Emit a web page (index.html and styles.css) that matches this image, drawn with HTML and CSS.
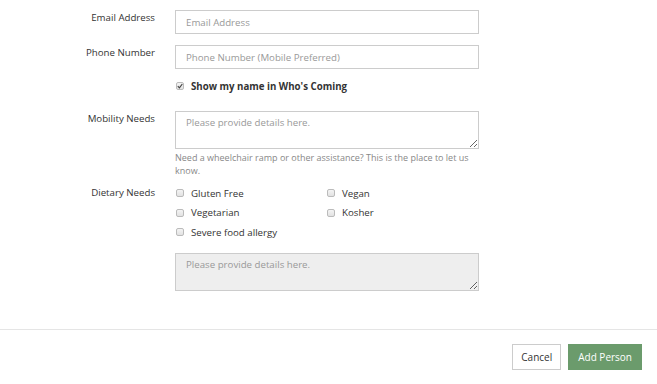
FILE: index.html
```html
<!DOCTYPE html>
<html lang="en">
<head>
    <meta charset="UTF-8">
    <title>Add Person</title>
    <link rel="stylesheet" href="styles.css">
</head>
<body>
    <div class="modal-body">
        <div class="form-row">
            <label class="form-label">Email Address</label>
            <input class="form-input" type="text" placeholder="Email Address">
        </div>
        <div class="form-row">
            <label class="form-label">Phone Number</label>
            <input class="form-input" type="text" placeholder="Phone Number (Mobile Preferred)">
        </div>
        <div class="form-row check-row">
            <span></span>
            <label class="check bold">
                <span class="box checked">
                    <svg width="6" height="6" viewBox="0 0 6 6"><path d="M0.8 3.2 L2.4 4.8 L5.3 1" fill="none" stroke="#444" stroke-width="1.2"/></svg>
                </span>
                Show my name in Who's Coming
            </label>
        </div>
        <div class="form-row mobility-row">
            <label class="form-label">Mobility Needs</label>
            <div>
                <textarea class="form-area" placeholder="Please provide details here."></textarea>
                <p class="help">Need a wheelchair ramp or other assistance? This is the place to let us know.</p>
            </div>
        </div>
        <div class="form-row">
            <label class="form-label diet-label">Dietary Needs</label>
            <div>
                <div class="diet-grid">
                    <label class="check"><span class="box"></span> Gluten Free</label>
                    <label class="check"><span class="box"></span> Vegan</label>
                    <label class="check"><span class="box"></span> Vegetarian</label>
                    <label class="check"><span class="box"></span> Kosher</label>
                    <label class="check"><span class="box"></span> Severe food allergy</label>
                </div>
                <textarea class="form-area disabled" placeholder="Please provide details here." disabled></textarea>
            </div>
        </div>
    </div>
    <div class="modal-footer">
        <button class="btn">Cancel</button>
        <button class="btn btn-primary">Add Person</button>
    </div>
</body>
</html>
```

FILE: styles.css
```css
body {
    margin: 0;
    font-family: "Open Sans", sans-serif;
    font-size: 10px;
    color: #333;
    background: #fff;
}
.modal-body {
    padding: 10px 0 0 0;
    height: 329px;
    box-sizing: border-box;
}
.form-row {
    display: grid;
    grid-template-columns: 155px 304px;
    column-gap: 20px;
    margin-bottom: 11px;
}
.form-label {
    text-align: right;
    padding-top: 1px;
    line-height: 14px;
    font-size: 9.7px;
}
.form-input {
    height: 24px;
    box-sizing: border-box;
    border: 1px solid #ccc;
    padding: 0 10px;
    font-family: "Open Sans", sans-serif;
    font-size: 9.7px;
    color: #333;
    margin: 0;
}
.form-input::placeholder,
.form-area::placeholder {
    color: #999;
}
.form-area {
    display: block;
    width: 304px;
    height: 38px;
    box-sizing: border-box;
    border: 1px solid #ccc;
    padding: 4px 10px;
    font-family: "Open Sans", sans-serif;
    font-size: 9.7px;
    margin: 0;
    resize: vertical;
}
.form-area.disabled {
    background: #eee;
}
.mobility-row {
    margin-bottom: 9px;
}
.help {
    margin: 2px 0 0 0;
    font-size: 9px;
    line-height: 13px;
    color: #888;
}
.check {
    display: flex;
    align-items: center;
    gap: 7px;
    height: 14px;
    font-size: 9.7px;
}
.box {
    display: flex;
    align-items: center;
    justify-content: center;
    width: 8px;
    height: 8px;
    box-sizing: border-box;
    margin-left: 1px;
    border: 1px solid #bbb;
    border-radius: 2px;
    background: linear-gradient(#f4f4f4, #e2e2e2);
}
.bold {
    font-weight: bold;
}
.check-row {
    margin: -1px 0 18px 0;
}
.diet-label {
    padding-top: 0;
}
.diet-grid {
    display: grid;
    grid-template-columns: 151px 151px;
    row-gap: 5.5px;
    margin-bottom: 14px;
}
.modal-footer {
    border-top: 1px solid #e5e5e5;
    display: flex;
    justify-content: flex-end;
    gap: 7px;
    padding: 14px 15px 0 0;
}
.btn {
    height: 26px;
    padding: 0 8px;
    border: 1px solid #ccc;
    background: #fff;
    color: #333;
    font-family: "Open Sans", sans-serif;
    font-size: 10px;
}
.btn-primary {
    background: #6b9b6c;
    border-color: #6b9b6c;
    color: #fff;
    padding: 0 9px;
}
```
